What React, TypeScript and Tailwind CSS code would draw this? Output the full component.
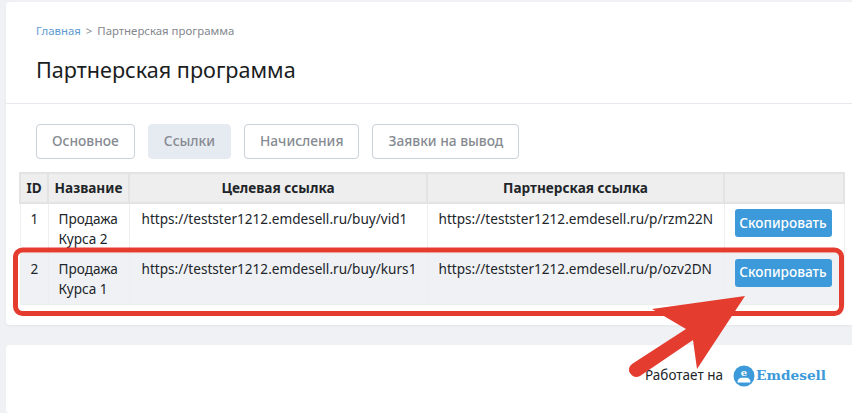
import React from "react";

const font = { fontFamily: '"Noto Sans", sans-serif' };

const rows = [
  {
    id: 1,
    name: ["Продажа", "Курса 2"],
    target: "https://testster1212.emdesell.ru/buy/vid1",
    partner: "https://testster1212.emdesell.ru/p/rzm22N",
  },
  {
    id: 2,
    name: ["Продажа", "Курса 1"],
    target: "https://testster1212.emdesell.ru/buy/kurs1",
    partner: "https://testster1212.emdesell.ru/p/ozv2DN",
  },
];

const tabs = [
  { label: "Основное", active: false },
  { label: "Ссылки", active: true },
  { label: "Начисления", active: false },
  { label: "Заявки на вывод", active: false },
];

function App() {
  return (
    <div
      className="relative h-[413px] w-[852px] overflow-hidden bg-[#eff1f5] pl-[6px] pt-[2px]"
      style={font}
    >
      <div className="h-[323px] w-[846px] rounded-l-[4px] bg-white shadow-[0_1px_3px_rgba(0,0,0,0.05)]">
        <div className="h-[102px] border-b border-[#e6e9ee] pl-[30px] pt-[22px]">
          <div className="flex h-[14px] items-center text-[11.4px] leading-[14px] text-[#83878d]">
            <span className="text-[#5c9bd1]">Главная</span>
            <span className="mx-[5px]">&gt;</span>
            <span>Партнерская программа</span>
          </div>
          <h1 className="mt-[17px] text-[21.6px] font-normal leading-[30px] text-[#1a1d21]">
            Партнерская программа
          </h1>
        </div>

        <div className="flex gap-[13px] pl-[30px] pt-[20px]">
          {tabs.map((tab) => (
            <div
              key={tab.label}
              className={`flex h-[35px] items-center rounded-[4px] border px-[15px] text-[13.75px] font-medium text-[#868b92] ${
                tab.active ? "border-[#e6eaf1] bg-[#e6eaf1]" : "border-[#c9d1db] bg-white"
              }`}
            >
              {tab.label}
            </div>
          ))}
        </div>

        <table className="ml-[13px] mt-[13px] w-[824px] table-fixed border-collapse text-[13.6px] text-[#212529]">
          <colgroup>
            <col className="w-[28px]" />
            <col className="w-[81px]" />
            <col className="w-[298px]" />
            <col className="w-[297px]" />
            <col className="w-[120px]" />
          </colgroup>
          <thead>
            <tr className="h-[30px] bg-[#eeeeee] text-[13.6px] font-bold">
              <th className="border-2 border-[#e3e3e3]">ID</th>
              <th className="border-2 border-[#e3e3e3]">Название</th>
              <th className="border-2 border-[#e3e3e3]">Целевая ссылка</th>
              <th className="border-2 border-[#e3e3e3]">Партнерская ссылка</th>
              <th className="border-2 border-[#e3e3e3]"></th>
            </tr>
          </thead>
          <tbody>
            {rows.map((row) => (
              <tr key={row.id} className={row.id === 2 ? "h-[51px] bg-[#eff1f5]" : "h-[50px] bg-white"}>
                <td className="border border-[#eeeeee] pl-[1px] pt-[5px] text-center align-top leading-[20px]">{row.id}</td>
                <td className="border border-[#eeeeee] pl-[10px] pt-[5px] align-top leading-[20px]">
                  {row.name[0]}
                  <br />
                  {row.name[1]}
                </td>
                <td className="border border-[#eeeeee] pl-[12px] pt-[5px] align-top leading-[20px]">{row.target}</td>
                <td className="border border-[#eeeeee] pl-[11px] pt-[5px] align-top leading-[20px]">{row.partner}</td>
                <td className="border border-[#eeeeee] pl-[10px] pt-[5px] align-top">
                  <div className="flex h-[28px] w-[97px] items-center justify-center rounded-[3px] bg-[#3c9ada] text-[13.6px] font-medium text-white">
                    Скопировать
                  </div>
                </td>
              </tr>
            ))}
          </tbody>
        </table>
      </div>

      <div className="mt-[20px] flex h-[68px] w-[846px] items-start justify-end rounded-l-[4px] bg-white pr-[26px] pt-[19px]">
        <span className="mt-[2px] text-[13.5px] leading-[18px] text-[#212529]">Работает на</span>
        <svg className="ml-[10px] mt-[1px]" width="22" height="22" viewBox="0 0 22 22">
          <circle cx="11" cy="11" r="10.5" fill="#3c9ada" />
          <path d="M4.5 17.5 Q4.5 12.8 9 12.8 H13 Q17.5 12.8 17.5 17.5 Z" fill="#fff" />
          <text x="11" y="10.5" textAnchor="middle" fontSize="10" fontWeight="700" fill="#fff" style={{ fontFamily: '"DejaVu Serif", serif' }}>
            e
          </text>
        </svg>
        <span className="ml-[1px] mt-[1px] text-[13.7px] font-bold leading-[20px] text-[#3c9ada]" style={{ fontFamily: '"DejaVu Serif", serif' }}>
          Emdesell
        </span>
      </div>

      {/* red marker drawn over the screenshot */}
      <svg className="pointer-events-none absolute left-0 top-0" width="852" height="413" viewBox="0 0 852 413">
        <rect x="15.5" y="250" width="826" height="63.5" rx="7" fill="none" stroke="#e53c30" strokeWidth="5" />
        <path d="M745 296 L652 309 L686 329 L632 364 Q627 368 630 373 Q634 379 640 376 L693 340 L697 369 Z" fill="#e53c30" />
      </svg>
    </div>
  );
}

export default App;
